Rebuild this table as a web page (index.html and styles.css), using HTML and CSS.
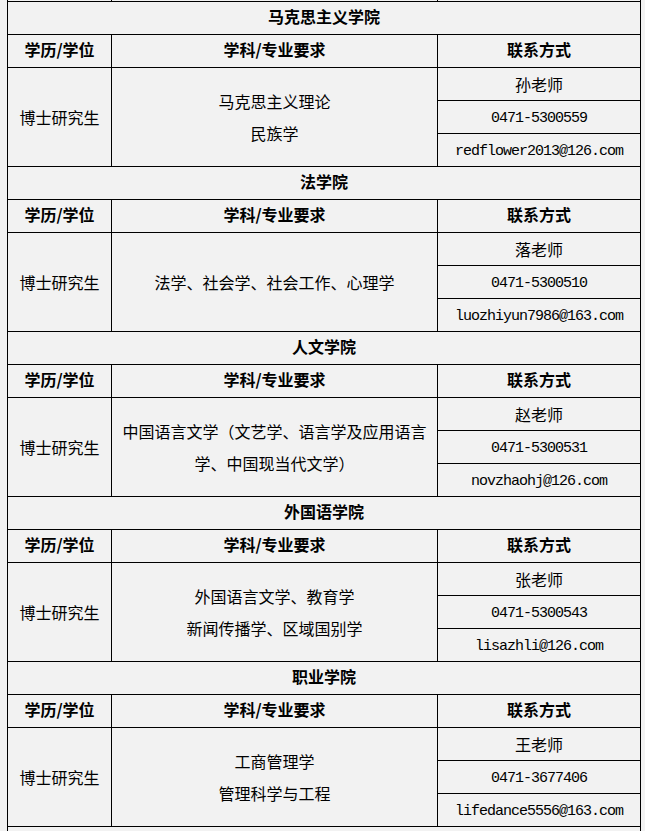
FILE: index.html
```html
<!DOCTYPE html>
<html lang="zh-CN">
<head>
<meta charset="utf-8">
<title>博士研究生招聘</title>
<link rel="stylesheet" href="styles.css">
</head>
<body>
<div class="wrap">
<table class="recruit">
  <colgroup>
    <col class="c1"><col class="c2"><col class="c3">
  </colgroup>
  <tbody>
    <tr class="prev"><td></td><td></td><td></td></tr>

    <tr><td class="title" colspan="3">马克思主义学院</td></tr>
    <tr class="head"><td>学历/学位</td><td>学科/专业要求</td><td>联系方式</td></tr>
    <tr><td rowspan="3">博士研究生</td><td rowspan="3" class="major"><div>马克思主义理论</div><div>民族学</div></td><td>孙老师</td></tr>
    <tr><td class="mono">0471-5300559</td></tr>
    <tr><td class="mono">redflower2013@126.com</td></tr>

    <tr><td class="title" colspan="3">法学院</td></tr>
    <tr class="head"><td>学历/学位</td><td>学科/专业要求</td><td>联系方式</td></tr>
    <tr><td rowspan="3">博士研究生</td><td rowspan="3" class="major"><div>法学、社会学、社会工作、心理学</div></td><td>落老师</td></tr>
    <tr><td class="mono">0471-5300510</td></tr>
    <tr><td class="mono">luozhiyun7986@163.com</td></tr>

    <tr><td class="title" colspan="3">人文学院</td></tr>
    <tr class="head"><td>学历/学位</td><td>学科/专业要求</td><td>联系方式</td></tr>
    <tr><td rowspan="3">博士研究生</td><td rowspan="3" class="major"><div>中国语言文学（文艺学、语言学及应用语言学、中国现当代文学）</div></td><td>赵老师</td></tr>
    <tr><td class="mono">0471-5300531</td></tr>
    <tr><td class="mono">novzhaohj@126.com</td></tr>

    <tr><td class="title" colspan="3">外国语学院</td></tr>
    <tr class="head"><td>学历/学位</td><td>学科/专业要求</td><td>联系方式</td></tr>
    <tr><td rowspan="3">博士研究生</td><td rowspan="3" class="major"><div>外国语言文学、教育学</div><div>新闻传播学、区域国别学</div></td><td>张老师</td></tr>
    <tr><td class="mono">0471-5300543</td></tr>
    <tr><td class="mono">lisazhli@126.com</td></tr>

    <tr><td class="title" colspan="3">职业学院</td></tr>
    <tr class="head"><td>学历/学位</td><td>学科/专业要求</td><td>联系方式</td></tr>
    <tr><td rowspan="3">博士研究生</td><td rowspan="3" class="major"><div>工商管理学</div><div>管理科学与工程</div></td><td>王老师</td></tr>
    <tr><td class="mono">0471-3677406</td></tr>
    <tr><td class="mono">lifedance5556@163.com</td></tr>

    <tr><td class="title" colspan="3">&nbsp;</td></tr>
  </tbody>
</table>
</div>
</body>
</html>
```

FILE: styles.css
```css
html, body {
  margin: 0;
  padding: 0;
  background: #f2f2f2;
}
body {
  overflow: hidden;
  height: 831px;
}
.wrap {
  padding-left: 7px;
}
.recruit {
  margin-top: -32px;
  border-collapse: collapse;
  table-layout: fixed;
  width: 633px;
  font-family: "Noto Sans CJK SC", "Noto Sans", sans-serif;
  font-size: 16px;
  color: #000;
  background: #f2f2f2;
}
.c1 { width: 104px; }
.c2 { width: 326px; }
.c3 { width: 203px; }
.recruit td {
  border: 1px solid #000;
  height: 32px;
  padding: 0;
  text-align: center;
  vertical-align: middle;
  line-height: 32px;
  white-space: nowrap;
}
.recruit td.major {
  white-space: normal;
  padding: 0 10px;
}
.recruit td.title,
.recruit tr.head td {
  font-weight: bold;
  line-height: 28px;
  padding-bottom: 4px;
  height: 28px;
}
.recruit td.mono {
  font-family: "Liberation Mono", "DejaVu Sans Mono", monospace;
  font-size: 15px;
  letter-spacing: -1px;
  line-height: 28px;
  padding-top: 4px;
  height: 28px;
}
```
